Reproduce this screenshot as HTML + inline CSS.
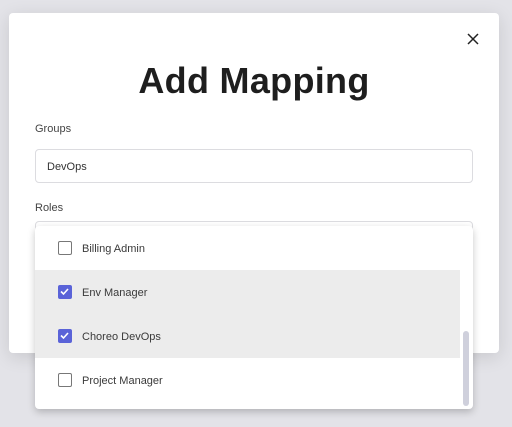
<!DOCTYPE html>
<html><head><meta charset="utf-8"><style>
*{box-sizing:border-box;margin:0;padding:0}
body{width:512px;height:427px;background:#e3e3e8;font-family:"Liberation Sans",sans-serif;position:relative;overflow:hidden}
.modal{position:absolute;left:9px;top:13px;width:490px;height:340px;background:#fff;border-radius:4px;box-shadow:0 4px 18px rgba(0,0,0,.12)}
.title{position:absolute;left:0;right:0;top:47px;text-align:center;font-size:36px;font-weight:bold;color:#1e1e1e;letter-spacing:.3px}
.lbl{position:absolute;left:35px;font-size:11px;color:#444}
.input{position:absolute;left:35px;width:438px;border:1px solid #dcdce0;border-radius:4px;background:#fff}
.menu{position:absolute;left:35px;top:226px;width:438px;height:183px;background:#fff;border-radius:4px;box-shadow:0 3px 8px rgba(0,0,0,.22)}
.row{position:absolute;left:0;width:425px;height:44px}
.row.sel{background:#ececec}
.cb{position:absolute;left:23px;top:15px;width:14px;height:14px;border:1.5px solid #777;border-radius:2px;background:#fff}
.sel .cb{background:#5a63d8;border-color:#5a63d8}
.row span{position:absolute;left:47px;top:17px;font-size:11px;color:#3a3a3a}
.sb{position:absolute;left:428px;top:105px;width:6px;height:75px;background:#cfd0dc;border-radius:3px}
</style></head><body>
<div class="modal">
<svg style="position:absolute;left:458px;top:20px" width="12" height="12" viewBox="0 0 12 12"><path d="M1 1L11 11M11 1L1 11" stroke="#222" stroke-width="1.5"/></svg>
<div class="title">Add Mapping</div>
</div>
<div class="lbl" style="top:123px">Groups</div>
<div class="input" style="top:149px;height:34px"><span style="position:absolute;left:11px;top:11px;font-size:11px;color:#333">DevOps</span></div>
<div class="lbl" style="top:202px">Roles</div>
<div class="input" style="top:221px;height:30px"></div>
<div class="menu">
<div class="row" style="top:0"><div class="cb"></div><span>Billing Admin</span></div>
<div class="row sel" style="top:44px"><div class="cb"><svg width="11" height="11" viewBox="0 0 11 11" style="position:absolute;left:0;top:0"><path d="M2 5.5L4.5 8L9 3" stroke="#fff" stroke-width="1.6" fill="none"/></svg></div><span>Env Manager</span></div>
<div class="row sel" style="top:88px"><div class="cb"><svg width="11" height="11" viewBox="0 0 11 11" style="position:absolute;left:0;top:0"><path d="M2 5.5L4.5 8L9 3" stroke="#fff" stroke-width="1.6" fill="none"/></svg></div><span>Choreo DevOps</span></div>
<div class="row" style="top:132px"><div class="cb"></div><span>Project Manager</span></div>
<div class="sb"></div>
</div>
</body></html>
